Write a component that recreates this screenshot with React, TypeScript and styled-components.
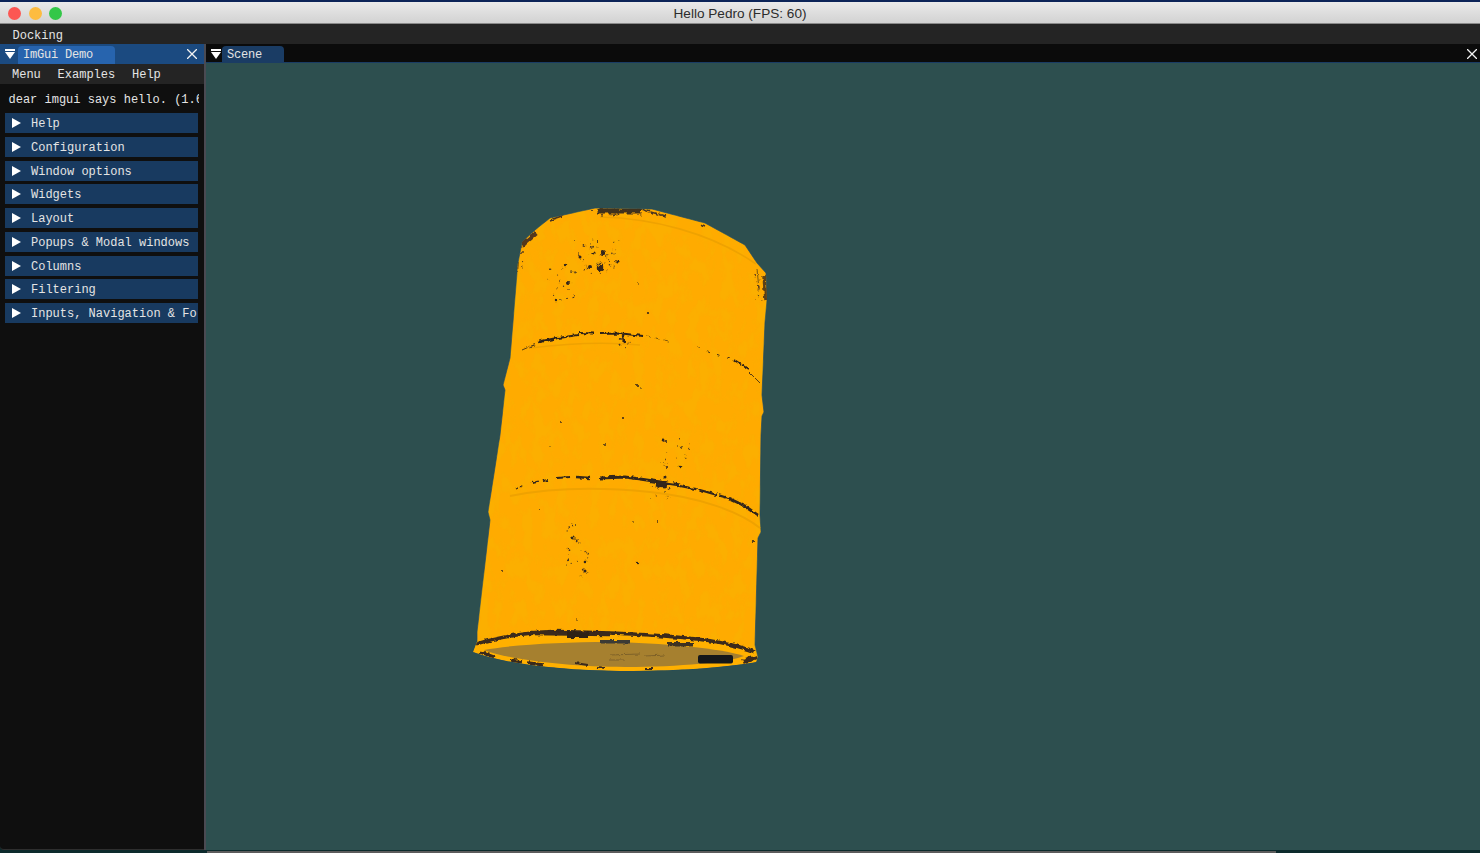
import React from "react";
import styled, { createGlobalStyle } from "styled-components";

const GlobalStyle = createGlobalStyle`
  html, body {
    margin: 0;
    padding: 0;
    height: 100%;
    background: #0c2a2c;
    overflow: hidden;
  }
  #root {
    height: 100%;
  }
`;

const mono = `"Liberation Mono", "DejaVu Sans Mono", monospace`;

const Page = styled.div`
  width: 1480px;
  height: 853px;
  display: flex;
  flex-direction: column;
  font-family: ${mono};
  font-size: 12px;
  color: #e4e4e4;
`;

const TitleBar = styled.div`
  height: 24px;
  box-sizing: border-box;
  flex: none;
  position: relative;
  display: flex;
  align-items: center;
  justify-content: center;
  border-top: 2px solid #0c2458;
  border-bottom: 1px solid #8a8a8a;
  background: linear-gradient(#eaeaea, #d2d2d2);
`;

const Lights = styled.div`
  position: absolute;
  left: 8px;
  top: 5px;
  display: flex;
  gap: 7.5px;
`;

const Light = styled.span<{ $color: string }>`
  width: 13px;
  height: 13px;
  border-radius: 50%;
  background: ${(p) => p.$color};
`;

const WindowTitle = styled.div`
  font-family: "Liberation Sans", Arial, sans-serif;
  font-size: 13.6px;
  color: #2c2c2c;
  margin-top: 1px;
`;

const MainMenu = styled.div`
  height: 20px;
  box-sizing: border-box;
  flex: none;
  display: flex;
  align-items: center;
  padding: 3px 0 0 12.5px;
  background: #242424;
`;

const Workspace = styled.div`
  flex: 1;
  min-height: 0;
  display: flex;
`;

const SidePanel = styled.div`
  width: 204px;
  flex: none;
  box-sizing: border-box;
  display: flex;
  flex-direction: column;
  background: #0f0f0f;
  border-bottom-left-radius: 4px;
  border-bottom: 1px solid #2e2e2e;
`;

const Splitter = styled.div`
  width: 2px;
  flex: none;
  background: #4a4a52;
`;

const SideTabs = styled.div`
  height: 20px;
  flex: none;
  display: flex;
  padding-left: 18px;
  position: relative;
  background: #1b4a80;
`;

const SceneTabs = styled.div`
  height: 19px;
  flex: none;
  display: flex;
  padding-left: 16px;
  position: relative;
  background: #0b0b0b;
  border-bottom: 1px solid #1a3c64;
  box-sizing: border-box;
`;

const Tab = styled.div<{ $active?: boolean; $width: number }>`
  width: ${(p) => p.$width}px;
  margin-top: 2px;
  box-sizing: border-box;
  padding: 2px 0 0 5px;
  font-size: 12px;
  letter-spacing: -0.2px;
  line-height: 15px;
  border-radius: 4px 4px 0 0;
  background: ${(p) => (p.$active ? "#2764ae" : "#1a3c64")};
`;

const DockButton = styled.svg`
  position: absolute;
  left: 5px;
  top: 5px;
  width: 10px;
  height: 10px;
`;

const CloseButton = styled.svg<{ $right: number }>`
  position: absolute;
  top: 5px;
  right: ${(p) => p.$right}px;
  width: 10px;
  height: 10px;
`;

const PanelMenu = styled.div`
  height: 20px;
  box-sizing: border-box;
  flex: none;
  display: flex;
  align-items: center;
  gap: 16.8px;
  padding: 2px 0 0 12px;
  background: #242424;
`;

const PanelBody = styled.div`
  flex: 1;
  min-height: 0;
  padding: 6.3px 6px 0 5px;
  display: flex;
  flex-direction: column;
  gap: 3.75px;
`;

const HelloLine = styled.div`
  height: 19px;
  line-height: 21px;
  padding-left: 3.5px;
  white-space: nowrap;
  overflow: hidden;
  margin-right: -1px;
`;

const Header = styled.div`
  height: 20px;
  flex: none;
  display: flex;
  align-items: center;
  gap: 10px;
  padding-left: 7px;
  background: #183a60;
  white-space: nowrap;
  overflow: hidden;
`;

const HeaderLabel = styled.span`
  margin-top: 2px;
`;

const Arrow = styled.svg`
  width: 9px;
  height: 10px;
  flex: none;
`;

const SceneColumn = styled.div`
  flex: 1;
  min-width: 0;
  display: flex;
  flex-direction: column;
`;

const SceneView = styled.div`
  flex: 1;
  min-height: 0;
  padding: 137px 0 0 259px;
  background: #2d4f4f;
  overflow: hidden;
`;

const BarrelSvg = styled.svg`
  display: block;
  width: 310px;
  height: 480px;
`;

const BottomEdge = styled.div`
  height: 3px;
  flex: none;
  display: flex;
  background: #0c2a2c;
`;

const ScrollLine = styled.div`
  width: 1069px;
  margin: 1px 0 0 207px;
  height: 2px;
  background: #5c5c5c;
`;

const sections = [
  "Help",
  "Configuration",
  "Window options",
  "Widgets",
  "Layout",
  "Popups & Modal windows",
  "Columns",
  "Filtering",
  "Inputs, Navigation & Fo",
];

const bodyOutline =
  "M595 208 L652 209 L705 223 L745 245 L757 263 L766 273 L767 300 L765 322 L762 395 L764 412 L762 416 L761 435 L760 515 L761 532 L758 538 L755 645 L758 657 L756 662 C735 666 690 671 620 671 C560 670 505 664 473 652 L477 642 L477 632 L490 520 L488 512 L500 435 L505 390 L503 385 L510 358 L517 273 L517 268 L522 242 L535 230 L550 218 Z";

// x, y, radius of the larger rust flecks on the shell
const flecks: [number, number, number][] = [
  [603, 253, 3], [600, 268, 3.2], [590, 267, 2], [593, 253, 1.6], [580, 257, 1.5],
  [565, 265, 1.2], [568, 283, 2], [556, 300, 1.2], [618, 262, 1.6], [598, 242, 1],
  [637, 385, 1], [641, 389, 0.8], [648, 313, 1.1], [638, 283, 0.8], [623, 418, 1],
  [560, 421, 0.9], [663, 440, 1.4], [666, 441, 1], [680, 467, 1.3], [665, 477, 1.5],
  [667, 467, 1], [573, 538, 1.6], [585, 562, 1.3], [585, 571, 1.5], [638, 562, 1.2],
  [502, 571, 0.9], [753, 541, 1.1], [633, 523, 0.8], [657, 522, 0.9], [539, 510, 0.9],
  [577, 620, 0.8], [550, 447, 0.7], [605, 445, 0.9],
];

// cx, cy, spread x, spread y, count: scattered speckle around the rust patches
const clusters: [number, number, number, number, number][] = [
  [595, 258, 26, 18, 46],
  [562, 285, 14, 18, 18],
  [676, 452, 16, 14, 16],
  [574, 545, 8, 22, 16],
  [584, 562, 4, 14, 8],
  [760, 285, 6, 18, 20],
  [520, 258, 4, 14, 10],
  [620, 212, 30, 4, 30],
  [660, 492, 10, 8, 14],
  [626, 342, 6, 6, 8],
];

const speckle = () => {
  const dots: { x: number; y: number; r: number }[] = [];
  let seed = 7;
  const next = () => {
    seed = (seed * 16807) % 2147483647;
    return (seed % 2000) / 1000 - 1;
  };
  clusters.forEach(([cx, cy, sx, sy, count]) => {
    for (let i = 0; i < count; i++) {
      dots.push({ x: cx + next() * sx, y: cy + next() * sy, r: 0.35 + Math.abs(next()) * 0.6 });
    }
  });
  return dots;
};

const Barrel = () => (
  <BarrelSvg viewBox="465 200 310 480">
    <defs>
      <clipPath id="shell">
        <path d={bodyOutline} />
      </clipPath>
      <filter id="grain" x="0" y="0" width="100%" height="100%">
        <feTurbulence type="fractalNoise" baseFrequency="0.09 0.05" numOctaves="4" seed="4" />
        <feColorMatrix values="0 0 0 0 0.86  0 0 0 0 0.53  0 0 0 0 0  0 0 0 5 -2.2" />
      </filter>
      <filter id="rough" x="-5%" y="-5%" width="110%" height="110%">
        <feTurbulence type="fractalNoise" baseFrequency="0.22" numOctaves="2" seed="9" />
        <feDisplacementMap in="SourceGraphic" scale="4" xChannelSelector="R" yChannelSelector="G" />
      </filter>
    </defs>

    <path d={bodyOutline} fill="#ffab00" stroke="#1d4a66" strokeWidth="0.7" />
    <g clipPath="url(#shell)">
      <rect x="465" y="200" width="310" height="480" filter="url(#grain)" opacity="0.2" />

      {/* faint pressed grooves under each band and the rim */}
      <g fill="none" stroke="#efa200">
        <path d="M600 217 C650 218 710 232 756 264" strokeWidth="1.6" />
        <path d="M530 348 C570 343 610 342 640 345" strokeWidth="1.6" />
        <path d="M510 496 C550 488 600 487 650 492 C700 497 740 512 760 528" strokeWidth="2" />
      </g>

      {/* bottom rim and underside */}
      <path d="M473 652 L476 642 L527 633 L550 631 L593 632 L660 635 L727 642 L755 652 L758 662 C735 666 690 671 620 671 C560 670 505 664 473 652 Z" fill="#ffb000" />
      <path d="M484 650 C510 645 560 642 610 642 C660 643 720 648 744 656 C730 662 680 667 625 667 C570 667 510 660 484 650 Z" fill="#a6802f" />
      <rect x="698" y="655" width="35" height="8.5" rx="2" fill="#14171a" />

      <g filter="url(#rough)">
        {/* top rim */}
        <path d="M597 211 L640 211" stroke="#40301f" strokeWidth="5" fill="none" />
        <path d="M522 245 L536 233" stroke="#54391f" strokeWidth="5" fill="none" />
        <path d="M550 220 L562 216 M640 209 L665 216 M700 224 L705 226" stroke="#4a3520" strokeWidth="1.4" fill="none" />
        <path d="M764 276 L766 300" stroke="#5c4018" strokeWidth="3.5" fill="none" />
        <path d="M757 268 L759 290" stroke="#7a5a14" strokeWidth="1" fill="none" />
        <path d="M518 262 L517 272" stroke="#7a5a14" strokeWidth="2" fill="none" />

        {/* upper band */}
        <g fill="none" stroke="#2f2218">
          <path d="M538 342 L558 338" strokeWidth="2.4" />
          <path d="M558 338 L578 335" strokeWidth="2" />
          <path d="M579 333 L594 333.5" strokeWidth="2" />
          <path d="M600 334 L622 333.5 L643 336" strokeWidth="2.2" />
          <path d="M623 335 L624 343" strokeWidth="2.5" />
          <path d="M522 350 L536 344" strokeWidth="0.8" strokeDasharray="6 2" />
          <path d="M646 336 L668 341" strokeWidth="0.7" strokeDasharray="5 4" />
          <path d="M696 347 L730 359" strokeWidth="0.9" strokeDasharray="3 8" />
          <path d="M734 360 L748 369" strokeWidth="1.6" />
          <path d="M748 371 L760 383" strokeWidth="0.8" />
        </g>

        {/* lower band */}
        <g fill="none" stroke="#33251a">
          <path d="M515 489 L524 485" strokeWidth="1.2" strokeDasharray="3 2" />
          <path d="M532 483 L548 480" strokeWidth="2" strokeDasharray="8 3" />
          <path d="M556 478 L570 477" strokeWidth="1.8" />
          <path d="M576 477 L590 478" strokeWidth="2.4" />
          <path d="M600 478 L625 477 L640 479 L660 482 L680 485" strokeWidth="3" />
          <path d="M656 484 L666 485" strokeWidth="7" />
          <path d="M680 486 L700 490 L728 498" strokeWidth="2.2" strokeDasharray="18 2" />
          <path d="M728 498 L745 506 L758 515" strokeWidth="2.6" />
        </g>

        {/* rust along the bottom rim */}
        <g fill="none" stroke="#3a291b">
          <path d="M476 644 C495 638 525 633 552 631.5 C585 632 640 634 670 636.5 C705 639 735 644 755 652" strokeWidth="3.4" />
          <path d="M530 633 L610 634" strokeWidth="4.4" />
          <path d="M480 652 L494 657 M510 660 L522 662 M528 663 L543 665" strokeWidth="3.4" />
          <path d="M743 662 L757 657" strokeWidth="4.5" />
          <path d="M575 663 L588 665 M598 667 L605 668 M645 669 L652 669" strokeWidth="1.8" />
        </g>
        <rect x="567" y="632" width="22" height="6" fill="#2e2217" />
        <rect x="600" y="640" width="30" height="3.5" fill="#3e3a34" />
        <rect x="668" y="642" width="25" height="4.5" fill="#3e3222" />
        <path d="M610 655 L640 654 M645 656 L665 655 M610 660 L625 660" stroke="#7e6128" strokeWidth="1" />

        {flecks.map(([x, y, r]) => (
          <circle key={`${x}-${y}`} cx={x} cy={y} r={r} fill="#33251a" />
        ))}
        {speckle().map((d, i) => (
          <circle key={i} cx={d.x} cy={d.y} r={d.r} fill="#4a3520" />
        ))}
      </g>
    </g>
  </BarrelSvg>
);

const DockIcon = () => (
  <DockButton viewBox="0 0 10 10">
    <rect width="10" height="2" fill="#fff" />
    <path d="M0 3 H10 L5 10 Z" fill="#fff" />
  </DockButton>
);

const CloseIcon = ({ right }: { right: number }) => (
  <CloseButton $right={right} viewBox="0 0 10 10">
    <path d="M0 0 L10 10 M10 0 L0 10" stroke="#f2f2f2" strokeWidth="1.3" />
  </CloseButton>
);

export default function App() {
  return (
    <Page>
      <GlobalStyle />
      <TitleBar>
        <Lights>
          <Light $color="#fc5753" />
          <Light $color="#fdbc40" />
          <Light $color="#33c748" />
        </Lights>
        <WindowTitle>Hello Pedro (FPS: 60)</WindowTitle>
      </TitleBar>
      <MainMenu>Docking</MainMenu>
      <Workspace>
        <SidePanel>
          <SideTabs>
            <DockIcon />
            <Tab $active $width={97}>ImGui Demo</Tab>
            <CloseIcon right={7} />
          </SideTabs>
          <PanelMenu>
            <span>Menu</span>
            <span>Examples</span>
            <span>Help</span>
          </PanelMenu>
          <PanelBody>
            <HelloLine>dear imgui says hello. (1.6</HelloLine>
            {sections.map((name) => (
              <Header key={name}>
                <Arrow viewBox="0 0 9 10">
                  <path d="M0 0 L9 5 L0 10 Z" fill="#fff" />
                </Arrow>
                <HeaderLabel>{name}</HeaderLabel>
              </Header>
            ))}
          </PanelBody>
        </SidePanel>
        <Splitter />
        <SceneColumn>
          <SceneTabs>
            <DockIcon />
            <Tab $width={62}>Scene</Tab>
            <CloseIcon right={3} />
          </SceneTabs>
          <SceneView>
            <Barrel />
          </SceneView>
        </SceneColumn>
      </Workspace>
      <BottomEdge>
        <ScrollLine />
      </BottomEdge>
    </Page>
  );
}
